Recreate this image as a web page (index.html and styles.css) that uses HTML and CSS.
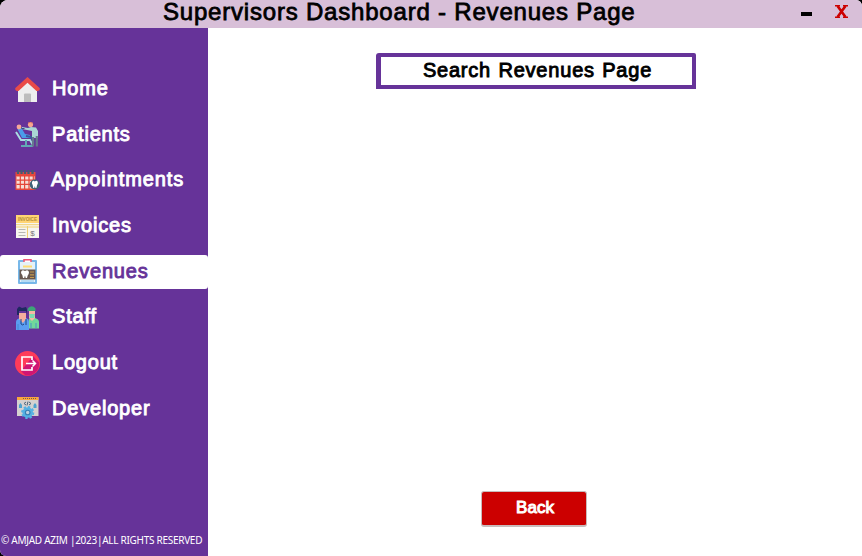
FILE: index.html
```html
<!DOCTYPE html>
<html lang="en">
<head>
<meta charset="utf-8">
<title>Supervisors Dashboard - Revenues Page</title>
<link rel="stylesheet" href="styles.css">
</head>
<body>
<div class="window">
  <header class="titlebar">
    <h1 class="title">Supervisors Dashboard - Revenues Page</h1>
    <button class="minimize" aria-label="Minimize"></button>
    <button class="close" aria-label="Close"><svg width="13" height="13" viewBox="0 0 13 13"><path d="M0 .7h5M8 .7h5M0 12.3h5M8 12.3h5" stroke="#c00" stroke-width="1.4"/><path d="M2.5 1l8 11M10.5 1l-8 11" stroke="#c00" stroke-width="2.6"/></svg></button>
  </header>
  <div class="body">
    <aside class="sidebar">
      <nav class="menu">
        <a class="item home"><svg class="icon" viewBox="0 0 25 25"><path d="M3 12L12.5 3 22 12v13H3z" fill="#eee"/><path d="M9 17.5q0-1 1-1h5q1 0 1 1V25H9z" fill="#bdbdbd"/><path d="M12.5 0L24.6 11Q25.5 13 23 14h-1.5L12.5 5.8 3.5 14H2Q-.5 13 .4 11z" fill="#e94b48"/></svg><span>Home</span></a>
        <a class="item patients"><svg class="icon" viewBox="0 0 25 25"><path d="M1 10l5 8h9l3 5" fill="none" stroke="#a9dce2" stroke-width="2"/><path d="M11 18v5M6 24h12" stroke="#62a9b5" stroke-width="2"/><path d="M2.5 7l4-1 3.5 6 5 1v3H7z" fill="#4a9bea"/><path d="M11 14l5 1 3 5" fill="none" stroke="#385a9b" stroke-width="2"/><circle cx="4" cy="5" r="2.4" fill="#f6a897"/><path d="M16 5l5 .5 2 3.5v7h-6V9l-5-1-5-1V5l6 1z" fill="#a9d6d5"/><path d="M18 15v9.5M21.8 14v10.5" stroke="#657b8e" stroke-width="2.2"/><circle cx="15.5" cy="2.5" r="2.6" fill="#f7a58f"/><path d="M13.3 1q2-2 4 .2" stroke="#d8685e" fill="none"/><path d="M6.5 6.5h3" stroke="#374f83"/></svg><span>Patients</span></a>
        <a class="item appointments"><svg class="icon" viewBox="0 0 25 25"><path d="M.5 4h20v18H.5z" fill="#e9483b"/><path d="M1.5 8h18v13h-18z" fill="#f6ddd5"/><path d="M1.5 8h18M1.5 12.2h18M1.5 16.4h18M1 21h19M5.3 8v13M9.6 8v13M14 8v13M18.3 8v13" stroke="#e44638" stroke-width="1.2"/><path d="M3 2v4M6.5 2v4M10 2v4M13.5 2v4M17.5 2v4" stroke="#455b71" stroke-width="2.3"/><circle cx="19.8" cy="16.5" r="5.1" fill="#3e6377"/><path d="M17 14q1.2-2 2.8-.6 2-1.4 3 .6.3 2-.7 3l-.7 3h-1l-.5-2-.7 2h-1l-.5-3q-1-1-.7-3z" fill="#fff"/></svg><span>Appointments</span></a>
        <a class="item invoices"><svg class="icon" viewBox="0 0 25 25"><path d="M1 1h23v23H1z" fill="#f7f6ef"/><path d="M1 1h23v8H1z" fill="#ffd574"/><path d="M1 10.7h23M12.5 12v12M1 13h23" stroke="#f2d071" stroke-width="1"/><text class="invoice-caption" x="12.5" y="6.9" text-anchor="middle" textLength="19" lengthAdjust="spacingAndGlyphs">INVOICE</text><path d="M3.5 15.5h7M3.5 18.5h7M3.5 21.5h7" stroke="#b7b8b3" stroke-width="1.2"/><text class="invoice-dollar" x="17.5" y="21.5" text-anchor="middle">$</text></svg><span>Invoices</span></a>
        <a class="item revenues active"><svg class="icon" viewBox="0 0 25 25"><rect x="3" y="1" width="19" height="24" rx="1" fill="#78b8e9"/><path d="M5 3h15v20H5z" fill="#e5f1f8"/><path d="M9 3V.8h7V3" fill="#fff" stroke="#ee5576" stroke-width="1.5"/><path d="M8 7.5h9" stroke="#ffdd75" stroke-width="2"/><path d="M4.5 10.5h16v10h-16z" fill="#67574f"/><path d="M6 13q1-3 4-1 3-2 4 1 0 2-1.3 3.5L12 19h-1.3L10 16.5 9.2 19H8l-.7-3Q6 15 6 13z" fill="#fff"/><path d="M15 13h4M15 15.8h4M15 18.5h4" stroke="#c49a4d" stroke-width="1.2"/><path d="M6 22h13" stroke="#8ac6ef"/></svg><span>Revenues</span></a>
        <a class="item staff"><svg class="icon" viewBox="0 0 25 25"><path d="M1 25V17q0-3 4-4h6q3 1 3 4v8z" fill="#5b9df1"/><path d="M14 23.5v-7.5q-1-3 2-3h4q4 1 4 4v6.5z" fill="#70d99b"/><path d="M4 8h7v6l-3 4-4-4z" fill="#f5ad9d"/><path d="M14 6h6v7l-3 3-3-3z" fill="#f6b9a3"/><path d="M2 10V4l2-2.5L7 3l4-1q2 3 0 7V6H4v4z" fill="#202861"/><path d="M12.7 6V3.5Q17-1 20.5 3.5V6z" fill="#3da477"/><path d="M14 9h6l-1 4h-4z" fill="#7bdbb0"/><path d="M6 14v5q2 2 3 0M11 14v6" stroke="#244788" fill="none"/><path d="M3 19v6M16 18v5M21 18v5" stroke="#3f83cb" stroke-width=".8"/></svg><span>Staff</span></a>
        <a class="item logout"><svg class="icon" viewBox="0 0 25 25"><circle cx="12.5" cy="12.5" r="12.5" fill="#ff3b59"/><path d="M6 20L18 5l6.3 6.8q0 9.3-8.6 12.8H10.5z" fill="#d01673"/><path d="M17 9V6H7v13h10v-3" fill="none" stroke="#fff" stroke-width="1.7"/><path d="M11 12.5h9M17.5 9.5l3 3-3 3" fill="none" stroke="#fff" stroke-width="1.5"/></svg><span>Logout</span></a>
        <a class="item developer"><svg class="icon" viewBox="0 0 25 25"><path d="M2 1h21.5v19H2z" fill="#d5d1d0"/><path d="M2 1h21.5v3H2z" fill="#f9a63e"/><path d="M8 2.5h14" stroke="#775b4d" stroke-dasharray="1 1"/><path d="M5.5 7l-1.5 2v3h3V9zM20 7l-1.5 2v3h3V9z" fill="#4da2d0"/><path d="M11 6L9 7.5 11 9M14 6l2 1.5L14 9M13 5.5l-1 4" fill="none" stroke="#4b667b"/><circle cx="12.7" cy="16.5" r="5.3" fill="#54b1e3"/><circle cx="12.7" cy="16.5" r="5.7" fill="none" stroke="#54b1e3" stroke-width="1.8" stroke-dasharray="2.4 2"/><circle cx="12.7" cy="16.5" r="2.3" fill="#b9d1e1" stroke="#3680b4" stroke-width="1.1"/></svg><span>Developer</span></a>
      </nav>
      <footer class="copyright">© AMJAD AZIM |2023|ALL RIGHTS RESERVED</footer>
    </aside>
    <main class="content">
      <div class="search"><span>Search Revenues Page</span></div>
      <button class="back"><span>Back</span></button>
    </main>
  </div>
</div>
</body>
</html>
```
FILE: styles.css
```css
* { box-sizing: border-box; }
body { margin: 0; background: #000; font-family: "Liberation Sans", Arial, sans-serif; }
button { padding: 0; border: 0; background: none; font-family: inherit; }
.window { display: flex; flex-direction: column; width: 862px; height: 556px; overflow: hidden; border-radius: 8px 6px 0 6px; background: #fff; }
.titlebar { display: flex; height: 28px; flex: none; background: #d8bfd8; padding-left: 163px; }
.title { margin: 0; width: 637px; height: 24px; font-size: 24px; line-height: 24px; font-weight: 400; letter-spacing: .8px; white-space: nowrap; -webkit-text-stroke: .8px #000; }
.minimize { width: 11px; height: 4px; margin: 12px 0 0 1px; background: #000; }
.close { width: 13px; height: 13px; margin: 5px 0 0 23px; }
.close svg { display: block; }
.body { display: flex; flex: 1; }
.sidebar { display: flex; flex-direction: column; justify-content: space-between; width: 208px; background: #663399; padding: 44px 0 9px; }
.menu { display: flex; flex-direction: column; gap: 11.7px; }
.item { display: flex; align-items: center; height: 34px; padding-left: 15px; gap: 12px; color: #fff; font-size: 20px; line-height: 24px; border-radius: 3px; letter-spacing: .8px; -webkit-text-stroke: .9px currentColor; }
.item span { margin-top: -2px; }
.item.home span { margin-top: -3px; }
.item.appointments span { margin-left: -1px; letter-spacing: .9px; }
.item.active { background: #fff; color: #663399; }
.icon { width: 25px; height: 25px; flex: none; -webkit-text-stroke: 0; letter-spacing: 0; }
.invoice-caption { font-size: 5px; font-weight: 700; fill: #b28d39; }
.invoice-dollar { font-size: 8px; fill: #777; }
.copyright { padding-left: 1px; color: #fff; font: 10px/14px "Noto Sans", sans-serif; letter-spacing: -.28px; white-space: nowrap; }
.content { display: flex; flex: 1; flex-direction: column; align-items: center; justify-content: space-between; padding: 25px 0 29px; }
.search { display: flex; justify-content: center; width: 320px; height: 36px; margin-left: 2px; padding-left: 2px; border: 4px solid #663399; border-left-width: 5px; border-radius: 3px 2px 0 0; font-size: 20px; line-height: 26px; letter-spacing: .8px; word-spacing: 1px; -webkit-text-stroke: .9px #000; }
.back { width: 106px; height: 36px; margin-right: 2px; border: 1px solid #c8bcbc; border-bottom-width: 2px; border-radius: 3px; background: #c00; color: #fff; font-size: 17px; line-height: 28px; -webkit-text-stroke: 1px #fff; }
.back span { position: relative; top: -1px; left: 1px; }
```
